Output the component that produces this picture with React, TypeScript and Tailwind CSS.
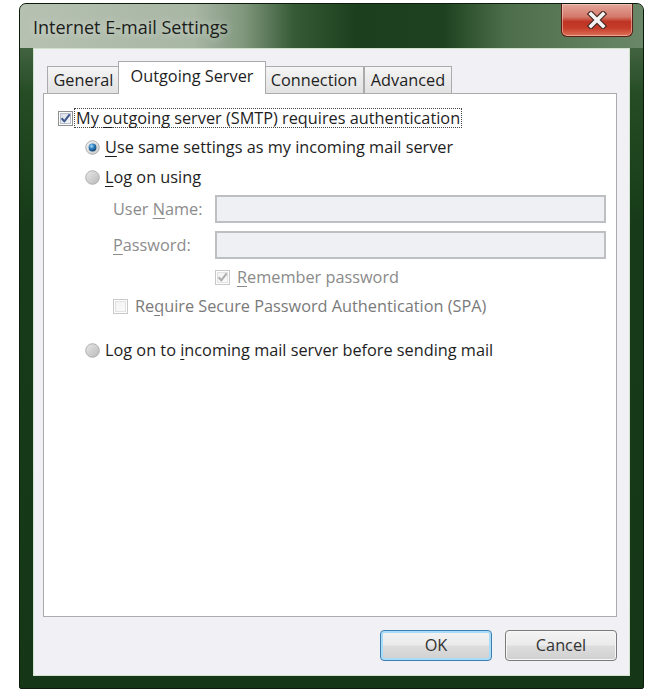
import React from "react";

function CheckBox({ checked, disabled, id }: { checked?: boolean; disabled?: boolean; id: string }) {
  const border = disabled ? "#c9c9c9" : "#8e8f8f";
  const check = disabled ? "#aeaeae" : "#41598d";
  return (
    <svg width="15" height="15" viewBox="0 0 15 15" className="shrink-0">
      <defs>
        <linearGradient id={id} x1="0" y1="0" x2="1" y2="1">
          <stop offset="0" stopColor={disabled ? "#f2f2f2" : "#d9dee6"} />
          <stop offset="1" stopColor={disabled ? "#fbfbfb" : "#f6f7f9"} />
        </linearGradient>
      </defs>
      <rect x="0.5" y="0.5" width="14" height="14" fill="#fdfdfd" stroke={border} />
      <rect x="2.5" y="2.5" width="10" height="10" fill={`url(#${id})`} stroke={disabled ? "#e2e2e2" : "#b6bfcb"} />
      {checked && (
        <path d="M3.6 7.3 L6.3 10.4 L11.7 3.4" fill="none" stroke={check} strokeWidth="2.1" strokeLinejoin="round" />
      )}
    </svg>
  );
}

function Radio({ checked, id }: { checked?: boolean; id: string }) {
  return (
    <svg width="15" height="15" viewBox="0 0 15 15" className="shrink-0">
      <defs>
        <linearGradient id={id + "r"} x1="0" y1="0" x2="1" y2="1">
          <stop offset="0" stopColor={checked ? "#f4f4f4" : "#e8e8e8"} />
          <stop offset="1" stopColor={checked ? "#c9c9c9" : "#b9b9b9"} />
        </linearGradient>
        <radialGradient id={id + "d"} cx="0.38" cy="0.32" r="0.75">
          <stop offset="0" stopColor="#a8dcff" />
          <stop offset="0.45" stopColor="#2f7fbd" />
          <stop offset="1" stopColor="#0d3a68" />
        </radialGradient>
      </defs>
      <circle cx="7.5" cy="7.5" r="6.8" fill={`url(#${id}r)`} stroke="#a9a9a9" strokeWidth="0.9" />
      {checked && <circle cx="7.5" cy="7.5" r="3.9" fill={`url(#${id}d)`} />}
    </svg>
  );
}

function U({ children }: { children: React.ReactNode }) {
  return <span className="underline underline-offset-[3px] decoration-1">{children}</span>;
}

function Tab({ label, selected, w }: { label: string; selected?: boolean; w: string }) {
  if (selected) {
    return (
      <div className={"relative z-10 -mx-[2px] -mb-px flex h-[33px] shrink-0 items-start justify-center border border-b-0 border-[#a9abad] bg-white pt-[6px] text-[#1e1e1e] " + w}>
        {label}
      </div>
    );
  }
  return (
    <div className={"flex h-[27px] shrink-0 items-center justify-center border border-b-0 border-[#a9abad] bg-[linear-gradient(180deg,#f5f5f5_0%,#ebebeb_50%,#e2e2e2_100%)] text-[#1e1e1e] " + w}>
      {label}
    </div>
  );
}

function Button({ label, primary }: { label: string; primary?: boolean }) {
  return (
    <div
      className={
        "flex h-[31px] w-[112px] items-center justify-center rounded-[4px] border bg-[linear-gradient(180deg,#f3f3f3_0%,#ebebeb_48%,#dddddd_52%,#d0d0d0_100%)] text-[#333] " +
        (primary
          ? "border-[#3c7fb1] shadow-[inset_0_0_0_2px_#a9dcf8]"
          : "border-[#7a7a7a] shadow-[inset_0_0_0_1px_#f7f7f7]")
      }
    >
      {label}
    </div>
  );
}

export default function App() {
  return (
    <div className="h-[690px] w-[658px] bg-white pl-[19px] pt-[3px] font-['Open_Sans',sans-serif] text-[16.3px] leading-none">
      <div className="flex h-[686px] w-[625px] flex-col overflow-hidden rounded-t-[7px] rounded-b-[2px] border border-[#0b1a0b] bg-[linear-gradient(180deg,#5d785a_0px,#254c25_90px,#173b18_220px,#153717_100%)]">
        {/* title bar */}
        <div className="flex h-[44px] shrink-0 items-start justify-between bg-[linear-gradient(90deg,#b6c1b2_0%,#a8b6a4_28%,#7f967c_36%,#365a35_44%,#1c401d_54%,#1e421f_68%,#4d6e4b_78%,#6a8867_100%)] pl-[13px] pr-[10px]">
          <div className="pt-[14px] text-[18px] text-[#1a1d1a] [text-shadow:0_0_8px_rgba(255,255,255,0.6)]">
            Internet E-mail Settings
          </div>
          <div className="flex h-[33px] w-[72px] items-center justify-center rounded-b-[6px] border border-t-0 border-[#5a1d16] bg-[linear-gradient(180deg,#e2a698_0%,#d4796b_40%,#bf3424_55%,#c53c2a_75%,#dc7258_100%)] shadow-[inset_0_0_0_1px_rgba(255,220,210,0.5)]">
            <svg width="22" height="18" viewBox="0 0 22 18">
              <path d="M5 3 L17 15 M17 3 L5 15" stroke="#4a2a26" strokeWidth="6" strokeLinecap="square" />
              <path d="M5 3 L17 15 M17 3 L5 15" stroke="#f4f4f4" strokeWidth="3.6" strokeLinecap="square" />
            </svg>
          </div>
        </div>

        {/* frame body */}
        <div className="flex flex-1 px-[13px] pb-[12px]">
          <div className="flex flex-1 flex-col border border-[#cfe3cc] bg-[#f1f0f4] pl-[9px] pr-[12px] pt-[12px]">
            {/* tabs */}
            <div className="flex h-[32px] shrink-0 items-end pl-[4px]">
              <Tab label="General" w="w-[73px]" />
              <Tab label="Outgoing Server" selected w="w-[148px]" />
              <Tab label="Connection" w="w-[100px]" />
              <Tab label="Advanced" w="w-[88px]" />
            </div>

            {/* tab panel */}
            <div className="flex flex-1 flex-col border border-[#a9abad] bg-white pl-[14px] pr-[10px] pt-[14px] text-[#1e1e1e]">
              <div className="flex h-[20px] items-center">
                <CheckBox checked id="cb1" />
                <div className="ml-[1px] flex h-[20px] items-center border border-dotted border-[#444] px-[1px]">
                  My <span className="ml-[4px]"><U>o</U>utgoing server (SMTP) requires authentication</span>
                </div>
              </div>

              <div className="mt-[9px] flex h-[20px] items-center pl-[27px]">
                <Radio checked id="r1" />
                <span className="ml-[5px]"><U>U</U>se same settings as my incoming mail server</span>
              </div>

              <div className="mt-[10px] flex h-[20px] items-center pl-[27px]">
                <Radio id="r2" />
                <span className="ml-[5px]"><U>L</U>og on using</span>
              </div>

              <div className="mt-[8px] flex h-[28px] items-center pl-[55px]">
                <span className="w-[102px] shrink-0 text-[#8c8c8c]">User <U>N</U>ame:</span>
                <div className="h-[28px] flex-1 border-2 border-[#bdbfc2] bg-[#eff0f3]" />
              </div>

              <div className="mt-[8px] flex h-[28px] items-center pl-[55px]">
                <span className="w-[102px] shrink-0 text-[#8c8c8c]"><U>P</U>assword:</span>
                <div className="h-[28px] flex-1 border-2 border-[#bdbfc2] bg-[#eff0f3]" />
              </div>

              <div className="mt-[8px] flex h-[20px] items-center pl-[157px]">
                <CheckBox checked disabled id="cb2" />
                <span className="ml-[7px] text-[#8a8a8a]"><U>R</U>emember password</span>
              </div>

              <div className="mt-[9px] flex h-[20px] items-center pl-[55px]">
                <CheckBox disabled id="cb3" />
                <span className="ml-[7px] text-[#7a7a7a]">Re<U>q</U>uire Secure Password Authentication (SPA)</span>
              </div>

              <div className="mt-[24px] flex h-[20px] items-center pl-[27px]">
                <Radio id="r3" />
                <span className="ml-[5px]">Log on to <U>i</U>ncoming mail server before sending mail</span>
              </div>
            </div>

            {/* buttons */}
            <div className="flex h-[58px] shrink-0 items-start justify-end gap-[13px] pt-[13px]">
              <Button label="OK" primary />
              <Button label="Cancel" />
            </div>
          </div>
        </div>
      </div>
    </div>
  );
}
